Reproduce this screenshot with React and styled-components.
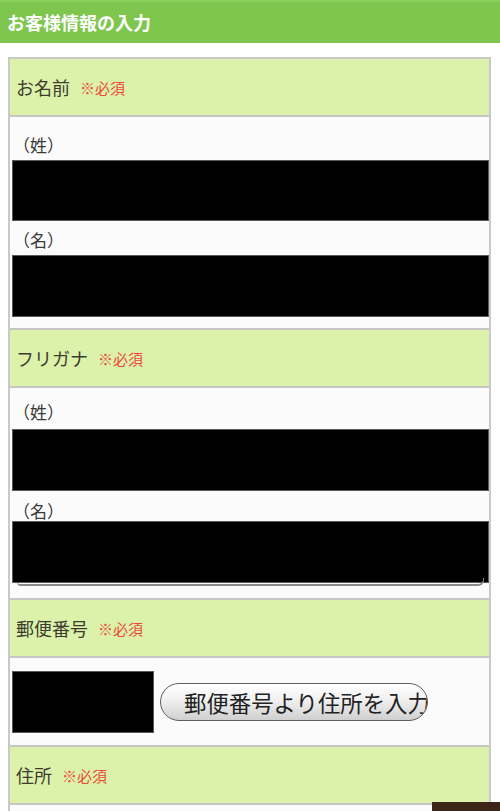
import React from "react";
import styled, { createGlobalStyle } from "styled-components";

const GlobalStyle = createGlobalStyle`
  body {
    margin: 0;
    background: #ffffff;
    font-family: "Noto Sans CJK JP", "Noto Sans", sans-serif;
    color: #3b3a32;
  }
`;

const App = () => {
  return (
    <>
      <GlobalStyle />
      <TitleBar>お客様情報の入力</TitleBar>
      <Main>
        <Table>
          <LabelRow>
            お名前<Required>※必須</Required>
          </LabelRow>
          <ContentRow $pt={15} $pb={11}>
            <SubLabel>（姓）</SubLabel>
            <Masked $mt={2} $h={61} />
            <SubLabel $mt={6}>（名）</SubLabel>
            <Masked $mt={2} $h={62} />
          </ContentRow>

          <LabelRow>
            フリガナ<Required>※必須</Required>
          </LabelRow>
          <ContentRow $pt={11} $pb={15}>
            <SubLabel>（姓）</SubLabel>
            <Masked $mt={4} $h={62} />
            <SubLabel $mt={10} $lh={20}>
              （名）
            </SubLabel>
            <Masked $h={62} $edge />
          </ContentRow>

          <LabelRow>
            郵便番号<Required>※必須</Required>
          </LabelRow>
          <PostalRow>
            <Masked $h={62} $w={142} />
            <ZipButton type="button">郵便番号より住所を入力</ZipButton>
          </PostalRow>

          <LabelRow>
            住所<Required>※必須</Required>
          </LabelRow>
          <ContentRow $pt={15} $pb={11}>
            <Masked $h={62} />
          </ContentRow>
        </Table>
      </Main>
      <PageTop />
    </>
  );
};
export default App;

const TitleBar = styled.header`
  height: 43px;
  box-sizing: border-box;
  border-top: 2px solid #8acd5b;
  background: #7ec64d;
  color: #ffffff;
  font-size: 18px;
  font-weight: 700;
  display: flex;
  align-items: center;
  padding: 0 0 2px 7px;
`;

const Main = styled.main`
  padding: 14px 9px 0 8px;
`;

const Table = styled.div`
  border: 2px solid #c9c9c9;
  border-bottom: none;
  display: flex;
  flex-direction: column;
`;

const LabelRow = styled.div`
  height: 56px;
  background: #dcf2aa;
  border-bottom: 2px solid #c6c6c6;
  display: flex;
  align-items: center;
  padding-left: 6px;
  font-size: 18px;
  color: #3d3b30;
`;

const Required = styled.span`
  margin-left: 10px;
  font-size: 15px;
  color: #ea4b38;
`;

const ContentRow = styled.div`
  background: #fbfbfb;
  border-bottom: 2px solid #c6c6c6;
  padding: ${(p) => p.$pt}px 0 ${(p) => p.$pb}px 2px;
  display: flex;
  flex-direction: column;
`;

const SubLabel = styled.div`
  margin-top: ${(p) => p.$mt || 0}px;
  line-height: ${(p) => p.$lh || 26}px;
  font-size: 17px;
  color: #3a3a36;
  padding-left: 1px;
`;

const Masked = styled.div`
  position: relative;
  flex: none;
  margin-top: ${(p) => p.$mt || 0}px;
  height: ${(p) => p.$h}px;
  width: ${(p) => (p.$w ? `${p.$w}px` : "auto")};
  background: #000000;
  box-shadow: 0 0 0 1px #5a5a5a inset;

  &::after {
    content: "";
    display: ${(p) => (p.$edge ? "block" : "none")};
    position: absolute;
    left: 5px;
    right: 5px;
    bottom: -3px;
    height: 6px;
    border-bottom: 2px solid #8a8a8a;
    border-right: 1px solid #8a8a8a;
    border-radius: 0 0 6px 4px;
  }
`;

const PostalRow = styled.div`
  background: #fbfbfb;
  border-bottom: 2px solid #c6c6c6;
  padding: 13px 0 12px 2px;
  display: flex;
  align-items: center;
  gap: 6px;
`;

const ZipButton = styled.button`
  width: 268px;
  height: 38px;
  padding: 0 0 0 23px;
  border: 1px solid #5e5e5e;
  border-radius: 19px;
  background: linear-gradient(#ffffff 0%, #f0f0f0 45%, #cfcfcf 100%);
  font-family: "Noto Sans CJK JP", "Noto Sans", sans-serif;
  font-size: 22.4px;
  color: #222222;
  white-space: nowrap;
  overflow: hidden;
  text-align: left;
  box-sizing: border-box;
`;

const PageTop = styled.div`
  position: fixed;
  right: 0;
  top: 802px;
  width: 68px;
  height: 48px;
  background: #3d2418;
`;
